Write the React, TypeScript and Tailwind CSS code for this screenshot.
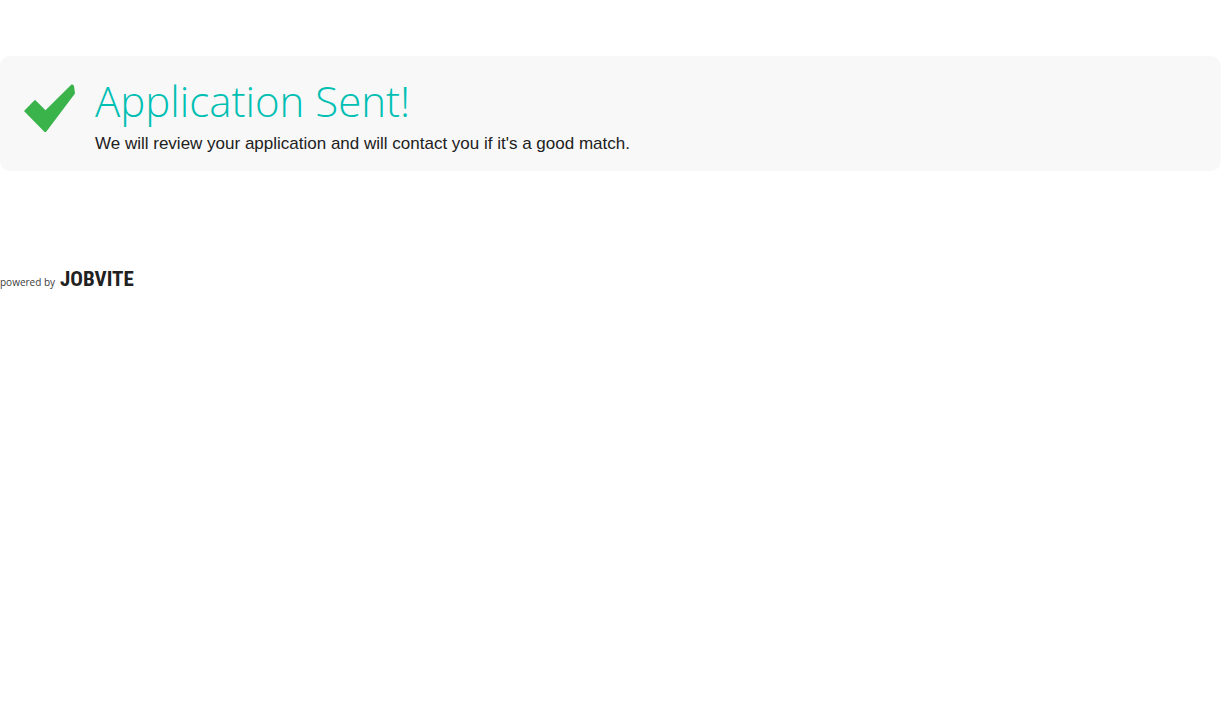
function CheckMark() {
  return (
    <svg viewBox="0 0 51 48" className="mt-7 h-12 w-[51px] shrink-0 fill-[#39b34a]" aria-hidden="true">
      <path d="M0 27 L10.500 16.300 Q11 16 11.500 16.300 L21.500 26.200 L47.500 0.500 Q49.500 0 50 2 L51 9.500 L22 48 Q21.300 48.500 20.600 48 Z" />
    </svg>
  );
}

function PoweredBy() {
  return (
    <footer className="mt-24 flex items-baseline gap-[5px] text-[#212121]">
      <span className="font-['Open_Sans',sans-serif] text-[10px] text-[#3c3c3c]">powered by</span>
      <span className="font-['Liberation_Sans_Narrow','Roboto_Condensed',sans-serif] text-[21px] leading-6 font-bold">
        JOBVITE
      </span>
    </footer>
  );
}

export default function App() {
  return (
    <main className="min-h-screen bg-white pt-14">
      <section className="flex gap-5 rounded-[10px] bg-[#f8f8f8] px-6 pb-[13px]">
        <CheckMark />
        <div className="pt-4">
          <h1 className="font-['Open_Sans',sans-serif] text-[42px] leading-[58px] font-light text-[#00bfb3]">
            Application Sent!
          </h1>
          <p className="font-['Liberation_Sans',sans-serif] text-[17px] leading-7 text-[#212121]">
            We will review your application and will contact you if it's a good match.
          </p>
        </div>
      </section>
      <PoweredBy />
    </main>
  );
}
